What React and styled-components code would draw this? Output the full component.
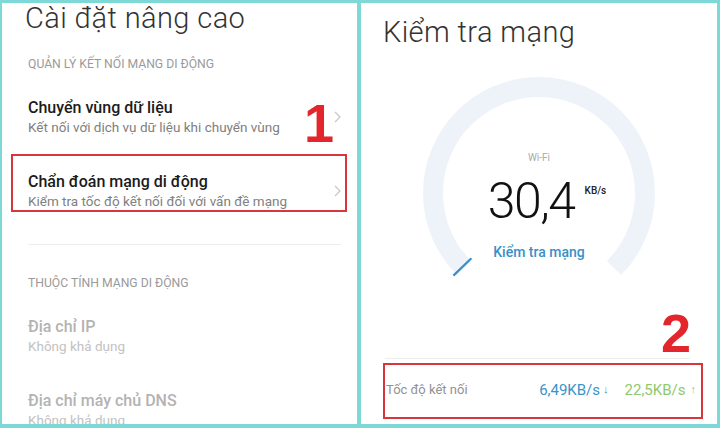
import React from "react";
import styled, { createGlobalStyle } from "styled-components";

const Global = createGlobalStyle`
  html, body { margin: 0; padding: 0; background: #7ed9d6; }
  body { font-family: Roboto, "Noto Sans", Arial, sans-serif; }
  * { box-sizing: border-box; }
`;

const Frame = styled.div`
  width: 720px;
  height: 428px;
  display: grid;
  grid-template-columns: 355px 356px;
  column-gap: 4px;
  padding: 3px 3px 4px 2px;
  background: #7ed9d6;
`;

const Panel = styled.div`
  background: #fff;
  clip-path: inset(-6px 0 0 0);
  display: flex;
  flex-direction: column;
  position: relative;
  min-height: 0;
`;

const PageTitle = styled.h1`
  margin: ${(p) => p.$top}px 0 0;
  padding-left: ${(p) => p.$left}px;
  font-family: Roboto, sans-serif;
  font-weight: 300;
  font-size: 29px;
  letter-spacing: 0.4px;
  line-height: 30px;
  color: #333;
  white-space: nowrap;
`;

const SectionHeader = styled.div`
  margin-top: ${(p) => p.$top}px;
  padding-left: 26px;
  font-size: 12.2px;
  line-height: 16px;
  color: #9a9a9a;
  text-transform: uppercase;
  white-space: nowrap;
`;

const Row = styled.div`
  position: relative;
  display: flex;
  align-items: center;
  padding: 18px 16px 18px 26px;
  margin-top: ${(p) => p.$top || 0}px;
  flex-shrink: 0;
`;

const RowText = styled.div`
  flex: 1;
  display: flex;
  flex-direction: column;
`;

const RowTitle = styled.div`
  font-size: 16px;
  line-height: 20px;
  font-weight: 500;
  color: ${(p) => (p.$disabled ? "#b3b3b3" : "#1b1b1b")};
  white-space: nowrap;
`;

const RowSub = styled.div`
  margin-top: 1px;
  font-size: 13.5px;
  line-height: 17px;
  color: ${(p) => (p.$disabled ? "#c2c2c2" : "#808080")};
  white-space: nowrap;
`;

const Divider = styled.div`
  height: 1px;
  flex-shrink: 0;
  background: #ededed;
  margin: ${(p) => p.$margin};
`;

const Annotation = styled.span`
  position: absolute;
  top: ${(p) => p.$top}px;
  left: ${(p) => p.$left}px;
  font-family: "Liberation Sans", Arial, sans-serif;
  font-weight: 700;
  font-size: 54px;
  line-height: 54px;
  color: #e3262c;
`;

const HighlightBox = styled.div`
  position: absolute;
  top: ${(p) => p.$top}px;
  left: ${(p) => p.$left}px;
  right: ${(p) => p.$right}px;
  height: ${(p) => p.$h}px;
  border: 2.5px solid #d8363d;
  pointer-events: none;
`;

const Chevron = () => (
  <svg width="7" height="12" viewBox="0 0 7 12">
    <path d="M1 1 L6 6 L1 11" fill="none" stroke="#c6c6c6" strokeWidth="1.2" />
  </svg>
);

const Gauge = styled.div`
  margin: 26px auto 0;
  width: 240px;
  height: 240px;
  flex-shrink: 0;
  display: grid;
  & > * { grid-area: 1 / 1; }
`;

const GaugeText = styled.div`
  display: flex;
  flex-direction: column;
  align-items: center;
  padding-top: 79px;
`;

const NetLabel = styled.div`
  font-size: 10px;
  line-height: 12px;
  color: #aaa;
`;

const SpeedRow = styled.div`
  margin-top: 12px;
  margin-left: 16px;
  display: flex;
  align-items: flex-start;
`;

const SpeedValue = styled.div`
  font-size: 50px;
  line-height: 50px;
  font-weight: 300;
  color: #111;
  letter-spacing: -1.5px;
`;

const SpeedUnit = styled.div`
  margin: 9px 0 0 10px;
  font-size: 10px;
  line-height: 12px;
  font-weight: 500;
  color: #222;
`;

const TestLink = styled.div`
  margin-top: 17px;
  font-size: 14px;
  line-height: 18px;
  font-weight: 500;
  color: #3a90c6;
`;

const Stats = styled.div`
  position: relative;
  margin-top: 45px;
`;

const StatsRow = styled.div`
  display: flex;
  align-items: center;
  height: 61px;
  padding: 0 21px 0 25px;
`;

const StatsLabel = styled.div`
  flex: 1;
  font-size: 13px;
  color: #929292;
`;

const StatValue = styled.div`
  font-size: 15px;
  color: ${(p) => p.$color};
  margin-left: ${(p) => p.$gap || 0}px;
  display: flex;
  align-items: center;
`;

const Arrow = styled.span`
  font-size: 11px;
  margin-left: ${(p) => p.$gap}px;
`;

const cx = 120, cy = 120, r = 106;
const pt = (deg, rad) => {
  const a = (deg * Math.PI) / 180;
  return [cx + rad * Math.cos(a), cy + rad * Math.sin(a)];
};
const [sx, sy] = pt(135, r);
const [ex, ey] = pt(45, r);
const [t1x, t1y] = pt(136, 94);
const [t2x, t2y] = pt(136, 119);

export default function App() {
  return (
    <>
      <Global />
      <Frame>
        <Panel>
          <PageTitle $top={0} $left={23}>Cài đặt nâng cao</PageTitle>
          <SectionHeader $top={23}>Quản lý kết nối mạng di động</SectionHeader>
          <Row $top={8}>
            <RowText>
              <RowTitle>Chuyển vùng dữ liệu</RowTitle>
              <RowSub>Kết nối với dịch vụ dữ liệu khi chuyển vùng</RowSub>
            </RowText>
            <Chevron />
            <Annotation $top={16} $left={302}>1</Annotation>
          </Row>
          <Row>
            <RowText>
              <RowTitle>Chẩn đoán mạng di động</RowTitle>
              <RowSub>Kiểm tra tốc độ kết nối đối với vấn đề mạng</RowSub>
            </RowText>
            <Chevron />
            <HighlightBox $top={0} $left={9} $right={10} $h={58} />
          </Row>
          <Divider $margin="16px 16px 0 26px" />
          <SectionHeader $top={30}>Thuộc tính mạng di động</SectionHeader>
          <Row $top={8}>
            <RowText>
              <RowTitle $disabled>Địa chỉ IP</RowTitle>
              <RowSub $disabled>Không khả dụng</RowSub>
            </RowText>
          </Row>
          <Row>
            <RowText>
              <RowTitle $disabled>Địa chỉ máy chủ DNS</RowTitle>
              <RowSub $disabled>Không khả dụng</RowSub>
            </RowText>
          </Row>
        </Panel>

        <Panel>
          <PageTitle $top={14} $left={22}>Kiểm tra mạng</PageTitle>
          <Gauge>
            <svg width="240" height="240" viewBox="0 0 240 240">
              <path
                d={`M ${sx} ${sy} A ${r} ${r} 0 1 1 ${ex} ${ey}`}
                fill="none"
                stroke="#eef3f9"
                strokeWidth="20"
              />
              <line x1={t1x} y1={t1y} x2={t2x} y2={t2y} stroke="#3a8fc6" strokeWidth="2.2" />
            </svg>
            <GaugeText>
              <NetLabel>Wi-Fi</NetLabel>
              <SpeedRow>
                <SpeedValue>30,4</SpeedValue>
                <SpeedUnit>KB/s</SpeedUnit>
              </SpeedRow>
              <TestLink>Kiểm tra mạng</TestLink>
            </GaugeText>
          </Gauge>
          <Stats>
            <Annotation $top={-52} $left={300}>2</Annotation>
            <Divider $margin="0 27px 0 24px" />
            <StatsRow>
              <StatsLabel>Tốc độ kết nối</StatsLabel>
              <StatValue $color="#3b93c8">
                6,49KB/s<Arrow $gap={3}>↓</Arrow>
              </StatValue>
              <StatValue $color="#8ec96c" $gap={16}>
                22,5KB/s<Arrow $gap={5}>↑</Arrow>
              </StatValue>
            </StatsRow>
            <HighlightBox $top={5} $left={22} $right={14} $h={56} />
          </Stats>
        </Panel>
      </Frame>
    </>
  );
}
